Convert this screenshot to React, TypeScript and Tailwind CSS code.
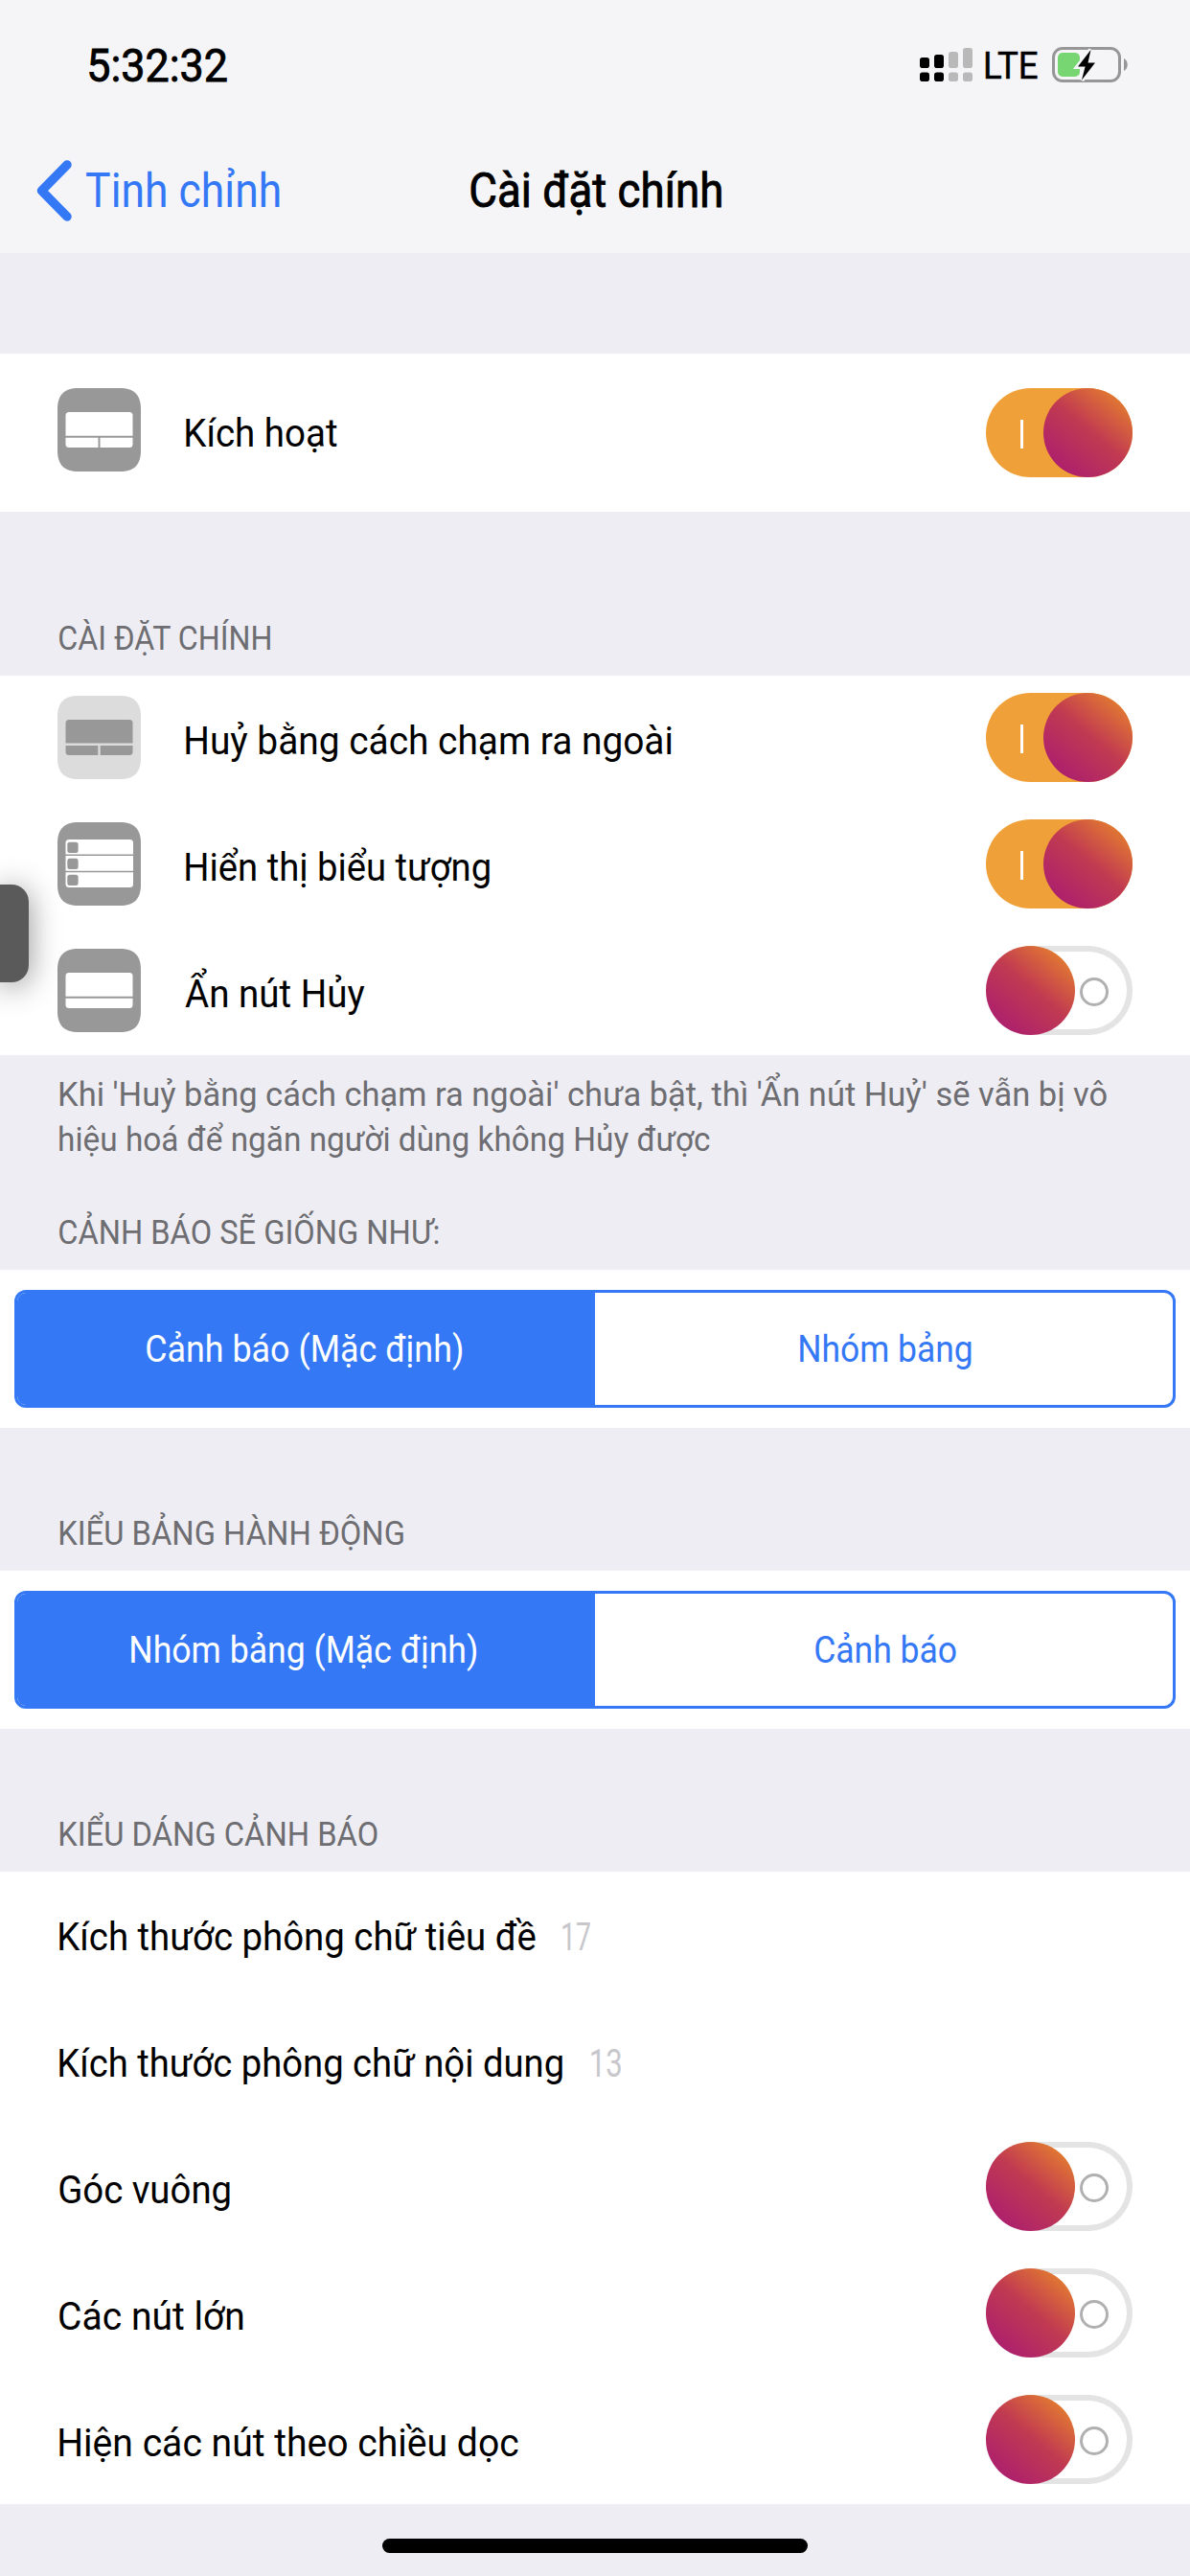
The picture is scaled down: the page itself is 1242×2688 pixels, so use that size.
import { useLayoutEffect, useRef, useState, type ReactNode } from "react";

/** Text condensed horizontally so that its visible ink spans `w` pixels. */
function Fit({ children, w, className = "" }: { children: string; w: number; className?: string }) {
  const ref = useRef<HTMLSpanElement>(null);
  const [t, setT] = useState("none");
  useLayoutEffect(() => {
    const el = ref.current;
    const ctx = document.createElement("canvas").getContext("2d");
    if (!el || !ctx) return;
    const cs = getComputedStyle(el);
    ctx.font = `${cs.fontWeight} ${cs.fontSize} ${cs.fontFamily}`;
    const m = ctx.measureText(children);
    const s = w / (m.actualBoundingBoxLeft + m.actualBoundingBoxRight);
    setT(`translateX(${m.actualBoundingBoxLeft * s}px) scaleX(${s})`);
  }, [children, w]);
  return (
    <span className={`block shrink-0 ${className}`} style={{ width: w }}>
      <span ref={ref} className="inline-block origin-left whitespace-nowrap" style={{ transform: t }}>
        {children}
      </span>
    </span>
  );
}

function Toggle({ on }: { on?: boolean }) {
  const knob = (
    <span className="size-[93px] shrink-0 rounded-full bg-[linear-gradient(40deg,#ac1f6e_12%,#c13a51_52%,#e27a31_88%)]" />
  );
  return on ? (
    <span className="flex h-[93px] w-[153px] shrink-0 rounded-full bg-[#f0a038]">
      <span className="mt-[33px] mr-[21px] ml-9 h-[30px] w-[3px] bg-white" />
      {knob}
    </span>
  ) : (
    <span className="flex h-[93px] w-[153px] shrink-0 rounded-full bg-white shadow-[inset_0_0_0_6px_#e4e4e4]">
      {knob}
      <span className="mt-[33px] ml-[5px] size-[30px] rounded-full border-[3px] border-[#b0b0b0]" />
    </span>
  );
}

type IconKind = "alert" | "dismiss" | "list" | "cancel";

function RowIcon({ kind }: { kind: IconKind }) {
  const light = kind === "dismiss";
  const bg = light ? "#dcdcdc" : "#989898";
  const fg = light ? "#989898" : "#ffffff";
  return (
    <svg width="87" height="87" viewBox="0 0 87 87" className="block shrink-0">
      <path
        d="M22 0H65C80 0 87 7 87 22V65C87 80 80 87 65 87H22C7 87 0 80 0 65V22C0 7 7 0 22 0Z"
        fill={bg}
      />
      {kind === "list" ? (
        <>
          <rect x="8.5" y="18" width="70.5" height="50" rx="3.5" fill={fg} />
          <path d="M8 34.3H80M8 51.5H80" stroke={bg} strokeWidth="1.6" />
          {[20.7, 37.7, 54.7].map((y) => (
            <rect key={y} x="10.3" y={y} width="11.3" height="11.3" rx="2.5" fill={bg} />
          ))}
        </>
      ) : (
        <>
          <rect x="8.5" y="25" width="70" height="37" rx="3.5" fill={fg} />
          <path d="M8 50.7H80" stroke={bg} strokeWidth={light ? 2.4 : 2} />
          {kind !== "cancel" && <path d="M43.5 51V63" stroke={bg} strokeWidth={light ? 2.4 : 2} />}
        </>
      )}
    </svg>
  );
}

function IconRow({ kind, label, w, on }: { kind: IconKind; label: string; w: number; on?: boolean }) {
  return (
    <div className="flex h-[132px] items-start pr-[60px] pl-[60px]">
      <div className="pt-[21px]">
        <RowIcon kind={kind} />
      </div>
      <Fit w={w} className={`mt-[2px] text-[41.5px] leading-[132px] ${kind === "cancel" ? "ml-[46px]" : "ml-[47px]"}`}>
        {label}
      </Fit>
      <div className="ml-auto pt-[18px]">
        <Toggle on={on} />
      </div>
    </div>
  );
}

function PlainRow({ label, w, children }: { label: string; w: number; children?: ReactNode }) {
  return (
    <div className="flex h-[132px] items-start pr-[60px] pl-[62px]">
      <Fit w={w} className="mt-[2px] text-[41.5px] leading-[132px]">
        {label}
      </Fit>
      {children}
    </div>
  );
}

function OffCell() {
  return (
    <div className="ml-auto pt-[18px]">
      <Toggle />
    </div>
  );
}

function GroupHeader({ h, w, children }: { h: string; w: number; children: string }) {
  return (
    <div className={`flex items-end pb-[14px] pl-[62px] text-[#6d6d72] ${h}`}>
      <Fit w={w} className="text-[35.5px] leading-[50px]">
        {children}
      </Fit>
    </div>
  );
}

function Segmented({ left, lw, right, rw }: { left: string; lw: number; right: string; rw: number }) {
  return (
    <div className="h-[165px] bg-white px-[15px] py-[21px]">
      <div className="flex h-[123px] overflow-hidden rounded-[12px] border-[3px] border-[#3478f6] text-[39px] leading-[119px]">
        <div className="flex w-[603px] justify-center bg-[#3478f6] pr-[5px] text-white">
          <Fit w={lw}>{left}</Fit>
        </div>
        <div className="flex flex-1 justify-center pl-1 text-[#3478f6]">
          <Fit w={rw}>{right}</Fit>
        </div>
      </div>
    </div>
  );
}

function StatusIcons() {
  return (
    <div className="flex h-[37px] items-start">
      <svg width="55" height="36" viewBox="0 0 55 36" className="mt-px block">
        {[
          [0, 10, "#000"],
          [15, 7, "#000"],
          [30, 4, "#b9b9b9"],
          [45, 0, "#b9b9b9"],
        ].map(([x, y, c]) => (
          <g key={x} fill={c as string}>
            <rect x={x} y={y} width="10" height={21 - (y as number)} rx="2.8" />
            <rect x={x} y="25.5" width="10" height="9.5" rx="2.8" />
          </g>
        ))}
      </svg>
      <Fit w={54} className="mt-[2px] ml-[14px] text-[38px] leading-[37px] [-webkit-text-stroke:0.5px_#000]">
        LTE
      </Fit>
      <svg width="80" height="37" viewBox="0 0 80 37" className="ml-[15px] block">
        <rect x="1.5" y="1.5" width="69" height="34" rx="9.5" fill="none" stroke="#969696" strokeWidth="3" />
        <path d="M75 12C80 14.500 80 22.500 75 25Z" fill="#969696" />
        <rect x="6" y="6" width="23" height="25" rx="5" fill="#78d672" />
        <path
          d="M40.500 3L27 20.600H34.600L31 34.500L45 16.400H37.500Z"
          fill="#000"
          stroke="#f5f5f7"
          strokeWidth="5"
          paintOrder="stroke"
        />
      </svg>
    </div>
  );
}

export default function App() {
  return (
    <div className="relative flex h-[2688px] w-[1242px] flex-col overflow-hidden bg-[#eeedf3] font-['Roboto','Noto_Sans',sans-serif] text-black">
      <header className="h-[264px] bg-[#f5f5f8]">
        <div className="flex h-[134px] items-start pr-[64px] pl-[93px]">
          <Fit w={144} className="mt-[44px] text-[48px] leading-[50px] [-webkit-text-stroke:0.9px_#000]">
            5:32:32
          </Fit>
          <div className="mt-[49px] ml-auto">
            <StatusIcons />
          </div>
        </div>
        <div className="grid h-[130px] grid-cols-[491px_1fr] text-[50px] leading-[130px]">
          <div className="flex items-center pl-[38px] text-[#3478f6]">
            <svg width="38" height="64" viewBox="0 0 38 64" className="block">
              <path
                d="M32 5L5.500 32L32 59"
                fill="none"
                stroke="currentColor"
                strokeWidth="9.500"
                strokeLinecap="round"
                strokeLinejoin="round"
              />
            </svg>
            <Fit w={202} className="ml-[14px]">
              Tinh chỉnh
            </Fit>
          </div>
          <Fit w={262} className="[-webkit-text-stroke:0.9px_#000]">
            Cài đặt chính
          </Fit>
        </div>
      </header>

      <section className="mt-[105px] flex h-[165px] items-start bg-white px-[60px] pt-9">
        <RowIcon kind="alert" />
        <Fit w={158} className="ml-[47px] text-[41.5px] leading-[93px]">
          Kích hoạt
        </Fit>
        <div className="ml-auto">
          <Toggle on />
        </div>
      </section>

      <GroupHeader h="h-[171px]" w={221}>CÀI ĐẶT CHÍNH</GroupHeader>
      <section className="bg-white">
        <IconRow kind="dismiss" label="Huỷ bằng cách chạm ra ngoài" w={507} on />
        <IconRow kind="list" label="Hiển thị biểu tượng" w={317} on />
        <IconRow kind="cancel" label="Ẩn nút Hủy" w={188} />
      </section>
      <div className="h-[112px] pt-[18px] pl-[62px] text-[35.5px] leading-[47px] text-[#6d6d72]">
        <Fit w={1093}>Khi 'Huỷ bằng cách chạm ra ngoài' chưa bật, thì 'Ẩn nút Huỷ' sẽ vẫn bị vô</Fit>
        <Fit w={679}>hiệu hoá để ngăn người dùng không Hủy được</Fit>
      </div>

      <GroupHeader h="h-[112px]" w={396}>CẢNH BÁO SẼ GIỐNG NHƯ:</GroupHeader>
      <Segmented left="Cảnh báo (Mặc định)" lw={329} right="Nhóm bảng" rw={179} />

      <GroupHeader h="h-[149px]" w={359}>KIỂU BẢNG HÀNH ĐỘNG</GroupHeader>
      <Segmented left="Nhóm bảng (Mặc định)" lw={360} right="Cảnh báo" rw={147} />

      <GroupHeader h="h-[149px]" w={332}>KIỂU DÁNG CẢNH BÁO</GroupHeader>
      <section className="bg-white">
        <PlainRow label="Kích thước phông chữ tiêu đề" w={497}>
          <Fit w={29} className="mt-[2px] ml-7 text-[41.5px] leading-[132px] text-[#c7c7cc]">
            17
          </Fit>
        </PlainRow>
        <PlainRow label="Kích thước phông chữ nội dung" w={525}>
          <Fit w={31} className="mt-[2px] ml-[30px] text-[41.5px] leading-[132px] text-[#c7c7cc]">
            13
          </Fit>
        </PlainRow>
        <PlainRow label="Góc vuông" w={178}>
          <OffCell />
        </PlainRow>
        <PlainRow label="Các nút lớn" w={192}>
          <OffCell />
        </PlainRow>
        <PlainRow label="Hiện các nút theo chiều dọc" w={479}>
          <OffCell />
        </PlainRow>
      </section>

      <div className="mx-auto mt-9 h-[15px] w-[444px] rounded-full bg-black" />

      <div className="absolute top-[923px] left-0 h-[102px] w-[30px] rounded-r-[18px] bg-[#5a5a5a] shadow-[0_4px_32px_rgba(0,0,0,0.45)]" />
    </div>
  );
}
